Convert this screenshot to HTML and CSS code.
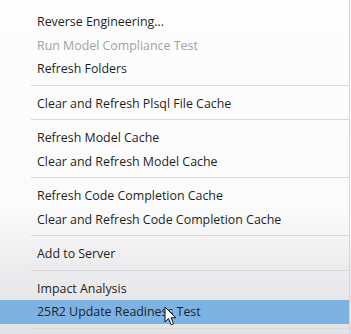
FILE: index.html
```html
<!DOCTYPE html>
<html>
<head>
<meta charset="utf-8">
<link rel="stylesheet" href="styles.css">
</head>
<body>
<div class="menu">
  <div class="item">Reverse Engineering...</div>
  <div class="item disabled">Run Model Compliance Test</div>
  <div class="item">Refresh Folders</div>
  <div class="sep"></div>
  <div class="item">Clear and Refresh Plsql File Cache</div>
  <div class="sep"></div>
  <div class="item">Refresh Model Cache</div>
  <div class="item">Clear and Refresh Model Cache</div>
  <div class="sep"></div>
  <div class="item">Refresh Code Completion Cache</div>
  <div class="item">Clear and Refresh Code Completion Cache</div>
  <div class="sep"></div>
  <div class="item">Add to Server</div>
  <div class="sep"></div>
  <div class="item">Impact Analysis</div>
  <div class="item active">25R2 Update Readiness Test</div>
  <div class="sep"></div>
  <svg class="cursor" width="14" height="21" viewBox="0 0 14 21">
    <path d="M1 1 L1 16 L4.5 12.5 L7.2 18.8 L9.6 17.8 L7 11.8 L11.8 11.8 Z" fill="#fff" stroke="#111" stroke-width="1" stroke-linejoin="round"/>
  </svg>
</div>
</body>
</html>
```
FILE: styles.css
```css
html, body {
  margin: 0;
  padding: 0;
}
body {
  width: 351px;
  height: 334px;
  overflow: hidden;
  background: linear-gradient(to bottom, #fdfdfd 0%, #fbfbfb 62%, #ececee 80%, #e3e3e5 100%);
  font-family: "Open Sans", "Noto Sans", sans-serif;
}
.menu {
  position: relative;
  padding-top: 10px;
  height: 324px;
  border-right: 1px solid #d6d6d8;
  width: 349px;
}
.item {
  height: 23.5px;
  line-height: 23.5px;
  padding-left: 37px;
  font-size: 12.4px;
  color: #1f1f1f;
  white-space: nowrap;
}
.item.disabled {
  color: #a2a2a2;
}
.item.active {
  background: #7db2e1;
  color: #1a2430;
}
.sep {
  height: 1px;
  background: #d9d9d9;
  margin: 4px 0 6px 31px;
}
.cursor {
  position: absolute;
  left: 164px;
  top: 306px;
}
```
